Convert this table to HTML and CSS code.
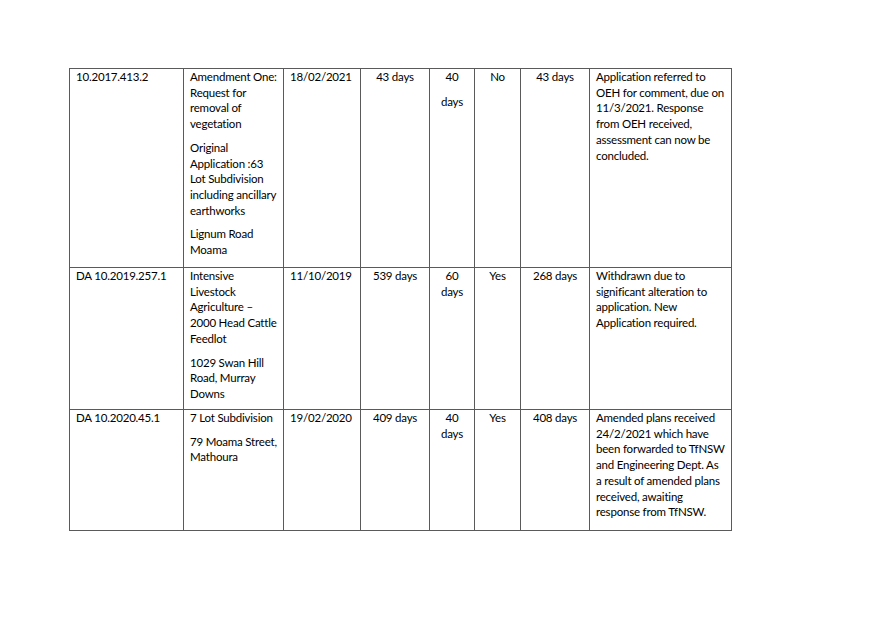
FILE: index.html
```html
<!DOCTYPE html>
<html lang="en">
<head>
<meta charset="utf-8">
<title>Applications</title>
<link rel="stylesheet" href="styles.css">
</head>
<body>
<div class="page">
<table class="grid">
<colgroup>
<col class="c1"><col class="c2"><col class="c3"><col class="c4"><col class="c5"><col class="c6"><col class="c7"><col class="c8">
</colgroup>
<tr class="r1">
<td><p>10.2017.413.2</p></td>
<td><p>Amendment One:<br>Request for<br>removal of<br>vegetation</p><p>Original<br>Application :63<br>Lot Subdivision<br>including ancillary<br>earthworks</p><p>Lignum Road<br>Moama</p></td>
<td><p>18/02/2021</p></td>
<td class="ctr"><p>43 days</p></td>
<td class="ctr"><p>40</p><p class="wide">days</p></td>
<td class="ctr"><p>No</p></td>
<td class="ctr"><p>43 days</p></td>
<td><p>Application referred to<br>OEH for comment, due on<br>11/3/2021. Response<br>from OEH received,<br>assessment can now be<br>concluded.</p></td>
</tr>
<tr class="r2">
<td><p>DA 10.2019.257.1</p></td>
<td><p>Intensive<br>Livestock<br>Agriculture –<br>2000 Head Cattle<br>Feedlot</p><p>1029 Swan Hill<br>Road, Murray<br>Downs</p></td>
<td><p>11/10/2019</p></td>
<td class="ctr"><p>539 days</p></td>
<td class="ctr"><p>60<br>days</p></td>
<td class="ctr"><p>Yes</p></td>
<td class="ctr"><p>268 days</p></td>
<td><p>Withdrawn due to<br>significant alteration to<br>application. New<br>Application required.</p></td>
</tr>
<tr class="r3">
<td><p>DA 10.2020.45.1</p></td>
<td><p>7 Lot Subdivision</p><p>79 Moama Street,<br>Mathoura</p></td>
<td><p>19/02/2020</p></td>
<td class="ctr"><p>409 days</p></td>
<td class="ctr"><p>40<br>days</p></td>
<td class="ctr"><p>Yes</p></td>
<td class="ctr"><p>408 days</p></td>
<td><p>Amended plans received<br>24/2/2021 which have<br>been forwarded to TfNSW<br>and Engineering Dept. As<br>a result of amended plans<br>received, awaiting<br>response from TfNSW.</p></td>
</tr>
</table>
</div>
</body>
</html>
```
FILE: styles.css
```css
html, body {
  margin: 0;
  padding: 0;
  background: #ffffff;
}
.page {
  padding: 68px 0 0 69px;
}
.grid {
  border-collapse: collapse;
  table-layout: fixed;
  width: 663px;
  font-family: Lato, "Open Sans", sans-serif;
  font-size: 11.5px;
  letter-spacing: -0.2px;
  line-height: 15.7px;
  color: #000000;
}
.c1 { width: 114px; }
.c2 { width: 100px; }
.c3 { width: 77px; }
.c4 { width: 69px; }
.c5 { width: 45px; }
.c6 { width: 46px; }
.c7 { width: 69px; }
.c8 { width: 142px; }
.grid td {
  border: 1px solid #5a5a5a;
  vertical-align: top;
  padding: 0 5px 0 6px;
  white-space: nowrap;
}
.grid td.ctr {
  text-align: center;
  padding: 0 2px;
}
.grid p {
  margin: 0 0 8px 0;
}
.grid p:last-child {
  margin-bottom: 0;
}
.grid p.wide {
  margin-top: 9px;
}
.r1 { height: 199px; }
.r2 { height: 142px; }
.r3 { height: 121px; }
```
